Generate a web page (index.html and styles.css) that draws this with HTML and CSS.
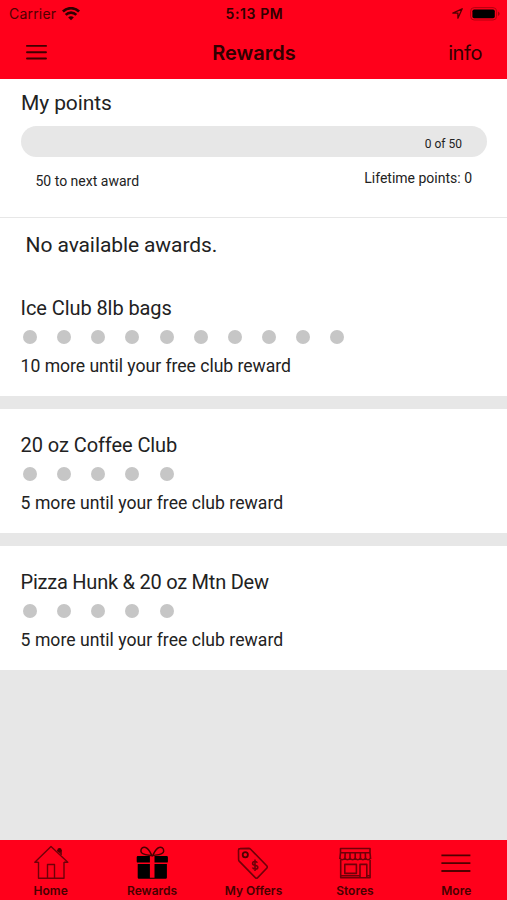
FILE: index.html
```html
<!DOCTYPE html>
<html lang="en">
<head>
  <meta charset="UTF-8">
  <meta name="viewport" content="width=device-width, initial-scale=1.0">
  <title>Rewards</title>
  <link rel="stylesheet" href="styles.css">
</head>
<body>

  <header class="header">
    <div class="status">
      <div class="carrier">
        <span>Carrier</span>
        <svg width="18" height="14" viewBox="0 0 18 14" fill="none" stroke="#300000" stroke-width="2.6">
          <path d="M.9 4.500a11.500 11.500 0 0 1 16.200 0"/>
          <path d="M3.700 7.900a7.400 7.400 0 0 1 10.600 0"/>
          <path d="M6.200 10.400a3.900 3.900 0 0 1 5.600 0L9 13.300z" fill="#300000" stroke="none"/>
        </svg>
      </div>
      <span class="time">5:13 PM</span>
      <div class="indicators">
        <svg width="11" height="11" viewBox="0 0 11 11" fill="none" stroke="#500000" stroke-width="1.3" stroke-linejoin="round">
          <path d="M10.200.8 5.900 10.200V5.100H.8z"/>
        </svg>
        <svg width="30" height="14" viewBox="0 0 30 14">
          <rect x=".6" y=".6" width="26" height="12.4" rx="3.6" fill="none" stroke="#b5000f"/>
          <rect x="2.4" y="2.4" width="22.4" height="8.8" rx="1.8" fill="#000"/>
          <path d="M28 4.600q1.700.7 1.700 2.200T28 9z" fill="#a5000c"/>
        </svg>
      </div>
    </div>
    <div class="navbar">
      <svg class="menu" width="21" height="16" viewBox="0 0 21 16" stroke="#400000" stroke-width="1.9" stroke-linecap="round">
        <path d="M1 .9h19M1 7.200h19M1 13.500h19"/>
      </svg>
      <h1 class="title">Rewards</h1>
      <a class="info">info</a>
    </div>
  </header>

  <main class="content">
    <section class="points">
      <h2 class="heading">My points</h2>
      <div class="progress"><span class="progress-text">0 of 50</span></div>
      <div class="points-row">
        <span class="next">50 to next award</span>
        <span class="lifetime">Lifetime points: 0</span>
      </div>
    </section>

    <p class="heading no-awards">No available awards.</p>

    <section class="club first">
      <h2 class="club-name">Ice Club 8lb bags</h2>
      <div class="dots"><i></i><i></i><i></i><i></i><i></i><i></i><i></i><i></i><i></i><i></i></div>
      <p class="remaining ten">10 more until your free club reward</p>
    </section>

    <section class="club">
      <h2 class="club-name">20 oz Coffee Club</h2>
      <div class="dots"><i></i><i></i><i></i><i></i><i></i></div>
      <p class="remaining">5 more until your free club reward</p>
    </section>

    <section class="club">
      <h2 class="club-name long">Pizza Hunk &amp; 20 oz Mtn Dew</h2>
      <div class="dots"><i></i><i></i><i></i><i></i><i></i></div>
      <p class="remaining">5 more until your free club reward</p>
    </section>
  </main>

  <nav class="tabs">
    <!-- Home -->
    <a class="tab">
      <svg width="36" height="36" viewBox="0 0 36 36" fill="none" stroke="#700008" stroke-width="1.4" stroke-linejoin="round">
        <path d="M5.500 17v16.300H31V17"/>
        <path d="M5.500 17.300H1.800L18 1.400 34.800 17.300H31"/>
        <path d="M14.500 33.300V19.500h7v13.800"/>
        <path d="M24.300 5.600h3.900V10" fill="#700008"/>
        <circle cx="26.500" cy="5.200" r="2.200" fill="#500000" stroke="none"/>
      </svg>
      <span>Home</span>
    </a>
    <!-- Rewards -->
    <a class="tab">
      <svg width="36" height="36" viewBox="0 0 36 36">
        <g fill="#000">
          <path d="M3.900 11h12v6.600h-12q-1.200 0-1.200-1.200v-4.200q0-1.200 1.200-1.200zM20.500 11h12.200q1.200 0 1.200 1.200v4.200q0 1.200-1.200 1.200H20.500z"/>
          <path d="M3.700 18.900h12.200v14.800H4.900q-1.200 0-1.200-1.200zM20.500 18.900h12.400v13.600q0 1.200-1.200 1.200H20.500zM14.300 32.800h8v.9h-8z"/>
        </g>
        <g fill="none" stroke="#480000" stroke-width="1.5">
          <path d="M17.800 10.500C14.800 9.800 7.300 10.500 6.900 6.300 6.700 3 9.100 1.800 11.500 2.500c3.400 1 4.800 5 6.300 8z"/>
          <path d="M18.800 10.500c3-.7 10.500-.2 10.900-4.200C29.900 3 27.500 1.800 25.100 2.500c-3.400 1-4.800 5-6.300 8z"/>
        </g>
      </svg>
      <span>Rewards</span>
    </a>
    <!-- My Offers -->
    <a class="tab">
      <svg width="36" height="36" viewBox="0 0 36 36" fill="none" stroke="#700008" stroke-width="1.6" stroke-linejoin="round">
        <path d="M5 3.600 13.600 3.400q1.200 0 2 .8L31.700 20.700q1.100 1.200 0 2.500L22.700 32.600q-1.200 1.200-2.400 0L4.400 16.400q-.8-.8-.8-2L3.500 5.200q0-1.600 1.500-1.600z"/>
        <circle cx="10.300" cy="9.800" r="2.600" stroke="#500000" stroke-width="1.8"/>
        <path d="M22.300 17.700c-.7-1.800-4.700-1.700-4.700.7 0 2.800 5.200 1 5.200 3.900 0 2.500-4.500 2.500-5.300.3M20 14.500v11.500"/>
      </svg>
      <span>My Offers</span>
    </a>
    <!-- Stores -->
    <a class="tab">
      <svg width="36" height="36" viewBox="0 0 36 36" fill="none" stroke="#700008" stroke-width="1.6" stroke-linejoin="round">
        <path d="M3.500 3.500h29.500v4.200h-29.500zM3.500 7.700 2.800 14M8.200 7.700l-.3 6.300M13 7.700V14M18.200 7.700V14M23.400 7.700V14M28.300 7.700l.2 6.300M33 7.700l.6 6.300"/>
        <path d="M2.800 13.300q2.500 3 5.100 0 2.500 3 5.100 0 2.600 3 5.200 0 2.600 3 5.200 0 2.500 3 5.100 0 2.500 3 5.100 0"/>
        <path d="M3.700 15v17.800h29.400V15M7.800 19.400h11.600v9H7.800zM23 32.800V19.400h6.800v13.400M3.700 30.800H23M29.800 30.800h3.300"/>
      </svg>
      <span>Stores</span>
    </a>
    <!-- More -->
    <a class="tab">
      <svg width="36" height="36" viewBox="0 0 36 36" stroke="#500000" stroke-width="1.8">
        <path d="M3.400 10.400h29M3.400 18.200h29M3.400 26h29"/>
      </svg>
      <span>More</span>
    </a>
  </nav>

</body>
</html>
```
FILE: styles.css
```css
* {
  box-sizing: border-box;
}
body, html {
  margin: 0;
  padding: 0;
  height: 100%;
}
body {
  display: flex;
  flex-direction: column;
  font-family: Roboto, sans-serif;
  background-color: #e7e7e7;
  color: #222;
  overflow: hidden;
}
h1, h2, p {
  margin: 0;
  font-weight: 400;
}
svg {
  display: block;
  flex: none;
}

/* Header */
.header {
  height: 79px;
  flex: none;
  background-color: #ff001b;
  color: #300000;
  font-family: Inter, sans-serif;
}
.status {
  height: 27px;
  padding: 0 7px 0 9px;
  display: grid;
  grid-template-columns: 1fr auto 1fr;
  align-items: center;
  font-size: 14px;
  line-height: 27px;
}
.carrier {
  display: flex;
  align-items: center;
  gap: 6px;
  color: #500000;
  letter-spacing: 0.2px;
}
.time {
  font-weight: 600;
  letter-spacing: 0.6px;
}
.indicators {
  display: flex;
  align-items: center;
  justify-content: flex-end;
  gap: 7px;
}
.navbar {
  height: 51px;
  padding: 0 25px 0 26px;
  display: grid;
  grid-template-columns: 1fr auto 1fr;
  align-items: center;
}
.title {
  font-size: 20px;
  font-weight: 600;
}
.info {
  justify-self: end;
  font-size: 20px;
  letter-spacing: -0.4px;
}

/* Content */
.content {
  flex: 1;
}
.heading {
  font-size: 21px;
  line-height: 26px;
  letter-spacing: -0.1px;
}
.points {
  height: 139px;
  padding: 11px 20px 0 21px;
  background-color: #fff;
  border-bottom: 1px solid #e7e7e7;
}
.progress {
  height: 31px;
  margin-top: 10px;
  padding: 11px 25px 0;
  border-radius: 16px;
  background-color: #e7e7e7;
  text-align: right;
}
.progress-text {
  display: block;
  font-size: 12px;
  line-height: 15px;
}
.points-row {
  display: flex;
  justify-content: space-between;
  padding: 11px 15px 0 14.5px;
  font-size: 14px;
  line-height: 20px;
}
.next {
  padding-top: 3px;
}
.no-awards {
  height: 63px;
  padding: 14px 25px 0 25.6px;
  background-color: #fff;
}
.club {
  height: 124px;
  margin-bottom: 13px;
  padding: 23px 20px 0 20.6px;
  background-color: #fff;
}
.first {
  height: 115px;
  padding-top: 14px;
}
.club-name {
  font-size: 20px;
  line-height: 26px;
  letter-spacing: -0.08px;
}
.long {
  letter-spacing: -0.24px;
}
.dots {
  display: flex;
  gap: 20.2px;
  padding: 9px 0 0 2.2px;
}
.dots i {
  width: 14px;
  height: 14px;
  border-radius: 50%;
  background-color: #c6c6c6;
}
.remaining {
  margin-top: 11px;
  font-size: 17.6px;
  line-height: 22px;
  letter-spacing: 0.03px;
}
.ten {
  letter-spacing: -0.03px;
}

/* Bottom tabs */
.tabs {
  height: 60px;
  flex: none;
  display: grid;
  grid-template-columns: repeat(5, 1fr);
  background-color: #ff001b;
}
.tab {
  padding-top: 5px;
  display: flex;
  flex-direction: column;
  align-items: center;
  color: #480000;
  font-family: Inter, sans-serif;
  font-size: 12px;
  font-weight: 600;
  line-height: 20px;
  white-space: nowrap;
}
```
